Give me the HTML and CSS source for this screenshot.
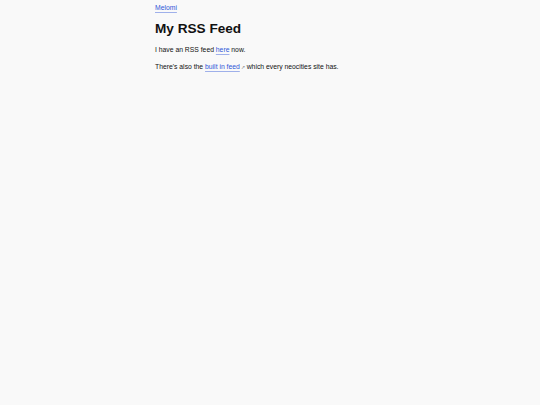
FILE: index.html
```html
<!DOCTYPE html>
<html>
<head>
<meta charset="utf-8">
<link rel="stylesheet" href="styles.css">
</head>
<body>
<main class="page">
  <nav class="top"><a href="#" class="link">Melomi</a></nav>
  <h1 class="title">My RSS Feed</h1>
  <p class="text">I have an RSS feed <a href="#" class="link">here</a> now.</p>
  <p class="text">There's also the <a href="#" class="link">built in feed</a><span class="ext">↗</span> which every neocities site has.</p>
</main>
</body>
</html>
```
FILE: styles.css
```css
html, body {
  margin: 0;
  padding: 0;
  background: #f9f9f9;
}
body {
  font-family: "Liberation Sans", Arial, sans-serif;
  color: #111;
}
.page {
  width: 230px;
  margin: 0 auto;
  padding-top: 3px;
}
.top {
  font-size: 6.8px;
  line-height: 9px;
}
.link {
  color: #2f56d8;
  text-decoration: underline;
  text-decoration-color: #9fb0ea;
  text-underline-offset: 1.5px;
}
.title {
  font-size: 13.6px;
  font-weight: bold;
  margin: 8px 0 8px;
  line-height: 17px;
}
.text {
  font-size: 6.8px;
  line-height: 9px;
  margin: 0 0 8px;
}
.ext {
  font-size: 5px;
  color: #888;
  margin-left: 1px;
}
```
